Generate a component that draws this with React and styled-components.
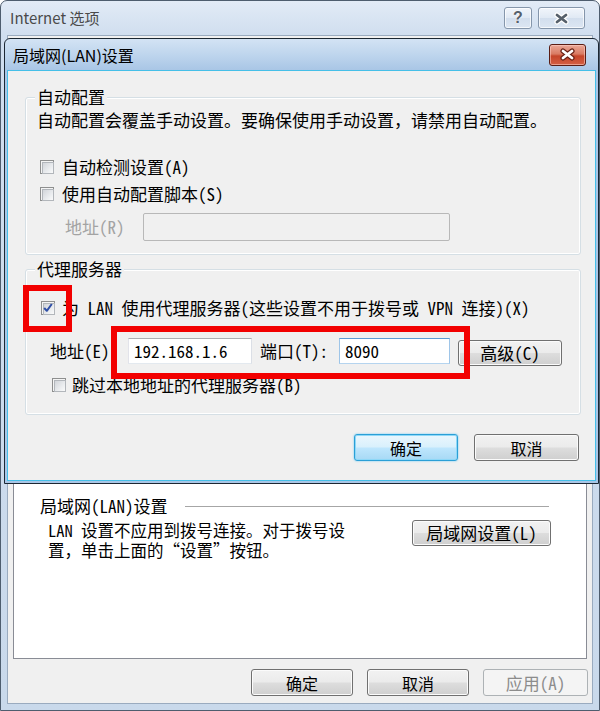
import React from "react";
import styled, { createGlobalStyle, css } from "styled-components";

const MONO = `"Noto Sans Mono CJK SC", "Noto Sans CJK SC", "Liberation Mono", monospace`;
const UI = `"Noto Sans CJK SC", "Open Sans", sans-serif`;

const Global = createGlobalStyle`
  html, body { margin: 0; padding: 0; background: #fff; }
  body { font-family: ${MONO}; font-size: 17px; color: #000; }
  * { box-sizing: border-box; }
`;

const Stage = styled.div`
  position: relative;
  width: 600px;
  height: 711px;
  overflow: hidden;
`;

/* ---------- outer window ---------- */
const OuterWindow = styled.div`
  width: 600px;
  height: 711px;
  border: 1px solid #4e5d6e;
  border-radius: 7px 7px 0 0;
  background: linear-gradient(180deg, #e2ebf6 0px, #d0deef 34px, #c9d9eb 100%);
  display: flex;
  flex-direction: column;
  padding: 0 6px 6px;
`;

const OuterTitleBar = styled.div`
  height: 34px;
  display: flex;
  align-items: center;
  padding-left: 3px;
`;

const OuterTitle = styled.div`
  flex: 1;
  font-family: ${UI};
  font-size: 15px;
  line-height: 18px;
  color: #4a4a4a;
`;

const CaptionGroup = styled.div`
  display: flex;
  gap: 6px;
  margin-right: 8px;
`;

const CaptionButton = styled.div`
  width: ${(p) => p.$w}px;
  height: 22px;
  border: 1px solid #8596ab;
  border-radius: 3px;
  background: linear-gradient(180deg, #f1f5fb 0%, #e0e9f4 50%, #d2deed 50%, #dce6f2 100%);
  box-shadow: inset 0 0 0 1px rgba(255, 255, 255, 0.7);
  display: flex;
  align-items: center;
  justify-content: center;
`;

const HelpGlyph = styled.span`
  font-family: "Liberation Sans", sans-serif;
  font-weight: bold;
  font-size: 16px;
  line-height: 16px;
  color: #55606c;
  text-shadow: 0 0 2px #fff, 0 0 1px #fff;
`;

const OuterClient = styled.div`
  flex: 1;
  background: #f0f0f0;
  border: 1px solid #9aabbf;
  display: flex;
  flex-direction: column;
  padding: 5px 5px 0 5px;
`;

const TabPage = styled.div`
  flex: 1;
  background: #fff;
  border: 1px solid #898c95;
  display: flex;
  flex-direction: column;
  justify-content: flex-end;
  padding: 0 35px 98px 26px;
`;

const SectionHeader = styled.div`
  display: flex;
  align-items: center;
  height: 18px;
  line-height: 18px;
`;

const Rule = styled.div`
  flex: 1;
  height: 1px;
  background: #a6a6a6;
  margin-left: 17px;
  margin-right: 2px;
`;

const SectionBody = styled.div`
  display: flex;
  justify-content: space-between;
  align-items: flex-start;
  margin-top: 5px;
`;

const SectionText = styled.div`
  padding-left: 8px;
`;

const SectionLine = styled.div`
  height: 20px;
  line-height: 20px;
  font-size: 16.5px;
  white-space: nowrap;
`;

const OuterButtonRow = styled.div`
  height: 44px;
  display: flex;
  justify-content: flex-end;
  align-items: flex-start;
  padding-top: 10px;
  gap: 14px;
  margin-right: -1px;
`;

/* ---------- buttons ---------- */
const Button = styled.div`
  width: ${(p) => p.$w}px;
  height: ${(p) => p.$h || 27}px;
  margin-left: ${(p) => p.$ml || 0}px;
  margin-top: ${(p) => p.$mt || 0}px;
  border: 1px solid #707070;
  border-radius: 3px;
  background: linear-gradient(180deg, #f2f2f2 0%, #ebebeb 48%, #dddddd 52%, #cfcfcf 100%);
  box-shadow: inset 0 0 0 1px #fbfbfb;
  display: flex;
  align-items: center;
  justify-content: center;
  font-family: ${(p) => (p.$mono ? MONO : UI)};
  font-size: ${(p) => (p.$mono ? 17 : 16)}px;
  line-height: 18px;
  color: #000;
  flex-shrink: 0;
  ${(p) =>
    p.$default &&
    css`
      border-color: #2b9fd6;
      background: linear-gradient(180deg, #eaf6fd 0%, #d9f0fc 48%, #bee6fd 52%, #a7d9f5 100%);
      box-shadow: inset 0 0 0 1px #8ed8f8, 0 0 2px #5ec7f5;
    `}
  ${(p) =>
    p.$disabled &&
    css`
      border-color: #adb2b5;
      background: #f4f4f4;
      box-shadow: none;
      color: #8c8c8c;
    `}
`;

/* ---------- inner dialog ---------- */
const Dialog = styled.div`
  position: absolute;
  left: 4px;
  top: 38px;
  width: 595px;
  height: 446px;
  border: 1px solid #1b2733;
  border-radius: 6px 6px 0 0;
  background: linear-gradient(180deg, #d3e3f4 0px, #bed5ed 16px, #a9c6e6 31px, #a9c6e6 100%);
  display: flex;
  flex-direction: column;
  padding: 0 2px 2px;
`;

const DialogTitleBar = styled.div`
  height: 31px;
  display: flex;
  align-items: center;
  padding-left: 6px;
`;

const DialogTitle = styled.div`
  flex: 1;
  font-family: ${UI};
  font-size: 16px;
  line-height: 18px;
  color: #000;
`;

const RedClose = styled.div`
  width: 37px;
  height: 22px;
  margin-right: 10px;
  border: 1px solid #5a1d14;
  border-radius: 3px;
  background: linear-gradient(180deg, #eaa898 0%, #d97b63 45%, #c5452a 55%, #d45f43 100%);
  box-shadow: inset 0 0 0 1px rgba(255, 210, 200, 0.55);
  display: flex;
  align-items: center;
  justify-content: center;
`;

const DialogClient = styled.div`
  position: relative;
  flex: 1;
  background: #f0f0f0;
  border: 1px solid #45bfe8;
  padding: 0 14px 0 17px;
`;

const GroupBox = styled.div`
  margin-top: ${(p) => p.$mt}px;
  border: 1px solid #d5dfe5;
  border-radius: 3px;
  box-shadow: inset 0 0 0 1px #fff;
  padding-bottom: ${(p) => p.$pb}px;
`;

const GroupTitle = styled.div`
  display: table;
  margin: -10px 0 0 9px;
  padding: 0 2px;
  background: #f0f0f0;
  line-height: 18px;
`;

const Desc = styled.div`
  margin-top: 5px;
  padding-left: 11px;
  line-height: 18px;
  white-space: nowrap;
`;

const CheckRow = styled.div`
  display: flex;
  align-items: center;
  height: 20px;
  margin-top: ${(p) => p.$mt}px;
  padding-left: ${(p) => p.$pl}px;
  gap: ${(p) => p.$gap}px;
  line-height: 18px;
  white-space: nowrap;
`;

const Box = styled.span`
  position: relative;
  width: 14px;
  height: 14px;
  flex-shrink: 0;
  border: 1px solid #8e8f8f;
  background: #f4f4f4;
  display: flex;
  align-items: center;
  justify-content: center;
  &::before {
    content: "";
    position: absolute;
    left: 1px;
    top: 1px;
    width: 10px;
    height: 10px;
    border: 1px solid #b2b6bb;
    background: linear-gradient(135deg, #d2d5da 0%, #eef0f2 70%, #fafafa 100%);
  }
  svg {
    position: relative;
  }
`;

const FieldRow = styled.div`
  display: flex;
  align-items: center;
  height: 28px;
  margin-top: ${(p) => p.$mt}px;
  padding-left: ${(p) => p.$pl}px;
  white-space: nowrap;
`;

const FieldLabel = styled.span`
  width: ${(p) => p.$w}px;
  margin-left: ${(p) => p.$ml || 0}px;
  flex-shrink: 0;
  line-height: 18px;
  color: ${(p) => (p.$disabled ? "#a3a3a3" : "#000")};
`;

const TextBox = styled.div`
  width: ${(p) => p.$w}px;
  height: ${(p) => p.$h || 26}px;
  flex-shrink: 0;
  border: 1px solid;
  border-color: #abadb3 #dbdfe6 #e3e9ef #e2e3ea;
  background: #fff;
  padding-left: 5px;
  display: flex;
  align-items: center;
  font-family: ${MONO};
  font-size: 17px;
  line-height: 18px;
  ${(p) =>
    p.$focused &&
    css`
      border-color: #5b9bd5 #9ec5e8 #b5d4ef #9ec5e8;
    `}
  ${(p) =>
    p.$disabled &&
    css`
      background: #f0f0f0;
      border-color: #b8b8b8;
      border-radius: 2px;
    `}
`;

const DialogButtonRow = styled.div`
  display: flex;
  justify-content: flex-end;
  gap: 16px;
  margin-top: 19px;
  padding-right: 2px;
`;

const Highlight = styled.div`
  position: absolute;
  left: ${(p) => p.$x}px;
  top: ${(p) => p.$y}px;
  width: ${(p) => p.$w}px;
  height: ${(p) => p.$h}px;
  border: 6px solid #f20000;
  pointer-events: none;
`;

/* ---------- icons ---------- */
const XGlyph = ({ color, outline }) => (
  <svg width="17" height="13" viewBox="0 0 17 13">
    <path d="M4 3 L13 10 M13 3 L4 10" stroke={outline} strokeWidth="5.2" strokeLinecap="round" fill="none" />
    <path d="M4 3 L13 10 M13 3 L4 10" stroke={color} strokeWidth="2.8" strokeLinecap="round" fill="none" />
  </svg>
);

const CheckMark = () => (
  <svg width="12" height="12" viewBox="0 0 12 12">
    <path d="M2.2 6 L4.8 8.8 L9.8 2" stroke="#2f4fa6" strokeWidth="2" fill="none" strokeLinejoin="round" />
  </svg>
);

const Checkbox = ({ checked }) => <Box>{checked && <CheckMark />}</Box>;

export default function App() {
  return (
    <Stage>
      <Global />
      <OuterWindow>
        <OuterTitleBar>
          <OuterTitle>Internet 选项</OuterTitle>
          <CaptionGroup>
            <CaptionButton $w={28}>
              <HelpGlyph>?</HelpGlyph>
            </CaptionButton>
            <CaptionButton $w={47}>
              <XGlyph color="#56606b" outline="#ffffff" />
            </CaptionButton>
          </CaptionGroup>
        </OuterTitleBar>
        <OuterClient>
          <TabPage>
            <SectionHeader>
              <span>局域网(LAN)设置</span>
              <Rule />
            </SectionHeader>
            <SectionBody>
              <SectionText>
                <SectionLine>LAN 设置不应用到拨号连接。对于拨号设</SectionLine>
                <SectionLine>置，单击上面的“设置”按钮。</SectionLine>
              </SectionText>
              <Button $w={139} $h={26} $mono>
                局域网设置(L)
              </Button>
            </SectionBody>
          </TabPage>
          <OuterButtonRow>
            <Button $w={102}>确定</Button>
            <Button $w={102}>取消</Button>
            <Button $w={105} $mono $disabled>
              应用(A)
            </Button>
          </OuterButtonRow>
        </OuterClient>
      </OuterWindow>

      <Dialog>
        <DialogTitleBar>
          <DialogTitle>局域网(LAN)设置</DialogTitle>
          <RedClose>
            <XGlyph color="#ffffff" outline="#6a2216" />
          </RedClose>
        </DialogTitleBar>
        <DialogClient>
          <GroupBox $mt={26} $pb={13}>
            <GroupTitle>自动配置</GroupTitle>
            <Desc>自动配置会覆盖手动设置。要确保使用手动设置，请禁用自动配置。</Desc>
            <CheckRow $mt={28} $pl={14} $gap={8}>
              <Checkbox />
              <span>自动检测设置(A)</span>
            </CheckRow>
            <CheckRow $mt={7} $pl={14} $gap={8}>
              <Checkbox />
              <span>使用自动配置脚本(S)</span>
            </CheckRow>
            <FieldRow $mt={9} $pl={39}>
              <FieldLabel $w={78} $disabled>
                地址(R)
              </FieldLabel>
              <TextBox $w={307} $h={28} $disabled />
            </FieldRow>
          </GroupBox>

          <GroupBox $mt={14} $pb={19}>
            <GroupTitle>代理服务器</GroupTitle>
            <CheckRow $mt={20} $pl={15} $gap={7}>
              <Checkbox checked />
              <span>为 LAN 使用代理服务器(这些设置不用于拨号或 VPN 连接)(X)</span>
            </CheckRow>
            <FieldRow $mt={19} $pl={24}>
              <FieldLabel $w={78}>地址(E)</FieldLabel>
              <TextBox $w={124}>192.168.1.6</TextBox>
              <FieldLabel $w={79} $ml={8}>
                端口(T):
              </FieldLabel>
              <TextBox $w={111} $focused>
                8090
              </TextBox>
              <Button $w={104} $h={26} $mono $ml={8} $mt={4}>
                高级(C)
              </Button>
            </FieldRow>
            <CheckRow $mt={10} $pl={26} $gap={6}>
              <Checkbox />
              <span>跳过本地地址的代理服务器(B)</span>
            </CheckRow>
          </GroupBox>

          <DialogButtonRow>
            <Button $w={104} $default>
              确定
            </Button>
            <Button $w={105}>取消</Button>
          </DialogButtonRow>

          <Highlight $x={15} $y={214} $w={49} $h={47} />
          <Highlight $x={103} $y={255} $w={359} $h={53} />
        </DialogClient>
      </Dialog>
    </Stage>
  );
}
